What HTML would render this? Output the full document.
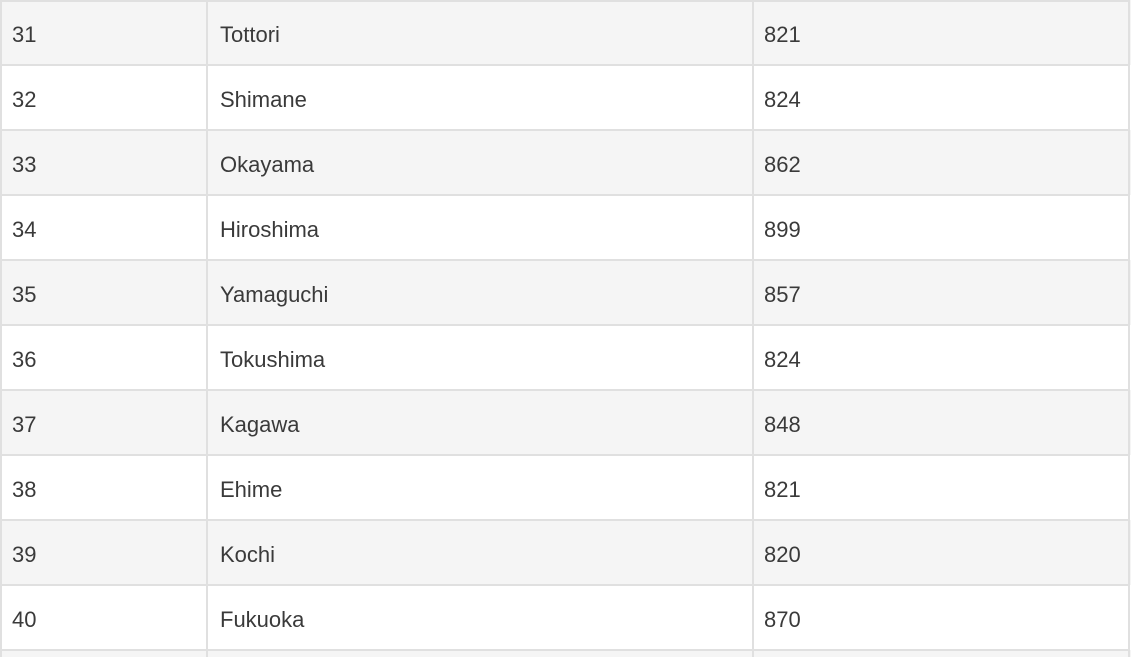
<!DOCTYPE html>
<html><head><style>
html,body{margin:0;padding:0;width:1131px;height:657px;overflow:hidden;background:#fff;position:relative}
.r{position:absolute;left:0;width:1131px;height:65px;font-family:"Liberation Sans",sans-serif;font-size:22px;color:#3a3a3a;overflow:hidden}
.r.g{background:#f5f5f5}
.r span{position:absolute;top:2px;line-height:66px}
.h{position:absolute;left:0;width:1130px;height:2px;background:#e0e0e0}
.v{position:absolute;top:0;width:2px;height:657px;background:#e0e0e0}
</style></head><body>
<div class="r g" style="top:0"><span style="left:12px">31</span><span style="left:220px">Tottori</span><span style="left:764px">821</span></div>
<div class="r" style="top:65px"><span style="left:12px">32</span><span style="left:220px">Shimane</span><span style="left:764px">824</span></div>
<div class="r g" style="top:130px"><span style="left:12px">33</span><span style="left:220px">Okayama</span><span style="left:764px">862</span></div>
<div class="r" style="top:195px"><span style="left:12px">34</span><span style="left:220px">Hiroshima</span><span style="left:764px">899</span></div>
<div class="r g" style="top:260px"><span style="left:12px">35</span><span style="left:220px">Yamaguchi</span><span style="left:764px">857</span></div>
<div class="r" style="top:325px"><span style="left:12px">36</span><span style="left:220px">Tokushima</span><span style="left:764px">824</span></div>
<div class="r g" style="top:390px"><span style="left:12px">37</span><span style="left:220px">Kagawa</span><span style="left:764px">848</span></div>
<div class="r" style="top:455px"><span style="left:12px">38</span><span style="left:220px">Ehime</span><span style="left:764px">821</span></div>
<div class="r g" style="top:520px"><span style="left:12px">39</span><span style="left:220px">Kochi</span><span style="left:764px">820</span></div>
<div class="r" style="top:585px"><span style="left:12px">40</span><span style="left:220px">Fukuoka</span><span style="left:764px">870</span></div>
<div class="r g" style="top:650px;height:7px"></div>
<div class="h" style="top:0"></div>
<div class="h" style="top:64px"></div>
<div class="h" style="top:129px"></div>
<div class="h" style="top:194px"></div>
<div class="h" style="top:259px"></div>
<div class="h" style="top:324px"></div>
<div class="h" style="top:389px"></div>
<div class="h" style="top:454px"></div>
<div class="h" style="top:519px"></div>
<div class="h" style="top:584px"></div>
<div class="h" style="top:649px"></div>
<div class="v" style="left:0"></div>
<div class="v" style="left:206px"></div>
<div class="v" style="left:752px"></div>
<div class="v" style="left:1128px"></div>
</body></html>
